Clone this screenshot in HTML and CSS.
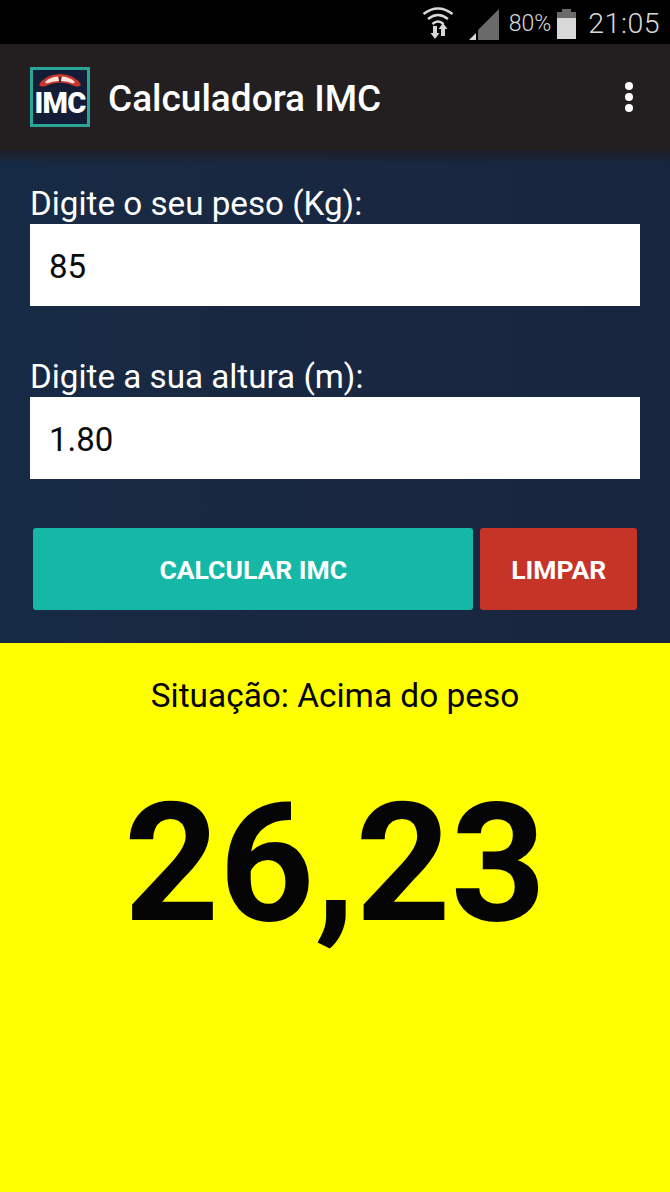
FILE: index.html
```html
<!DOCTYPE html>
<html lang="pt">
<head>
<meta charset="utf-8">
<title>Calculadora IMC</title>
<link rel="stylesheet" href="styles.css">
</head>
<body>
<div class="screen">
  <div class="status">
    <svg class="wifi" width="32" height="34" viewBox="0 0 32 34">
      <path d="M1.500 8 Q16 -3 30.500 8" fill="none" stroke="#d8d8d8" stroke-width="2.600"/>
      <path d="M6 13 Q16 5 26 13" fill="none" stroke="#d8d8d8" stroke-width="2.600"/>
      <path d="M10.500 18 Q16 13 21.500 18" fill="none" stroke="#d8d8d8" stroke-width="2.600"/>
      <path d="M11 20h4v7h2.500l-4.500 6l-4.500-6H11z" fill="#d8d8d8"/>
      <path d="M21 17l4.500 6H23v7h-4v-7h-2.500z" fill="#d8d8d8"/>
    </svg>
    <svg class="signal" width="30" height="31" viewBox="0 0 30 31">
      <path d="M30 0V31H9V21z" fill="#6a6a6a"/>
      <path d="M7 24V31H0z" fill="#d8d8d8"/>
    </svg>
    <span class="pct">80%</span>
    <svg class="battery" width="19" height="30" viewBox="0 0 19 30">
      <path d="M5 0h9v3h5v7H0V3h5z" fill="#6a6a6a"/>
      <path d="M0 9h19v21H0z" fill="#d8d8d8"/>
    </svg>
    <span class="clock">21:05</span>
  </div>
  <header class="appbar">
    <div class="logo">
      <svg class="logo-arc" width="44" height="16" viewBox="0 0 44 16">
        <path d="M1 12 Q6 2 22 1 Q38 2 43 12 Q40 15 34 12 Q22 7 10 12 Q4 15 1 12z" fill="#c9372c"/>
        <path d="M7 9 Q12 4 20 3.500 L21 8 Q14 8 9 10.500z M37 9 Q32 4 24 3.500 L23 8 Q30 8 35 10.500z" fill="#fbe4dc"/>
        <path d="M21.300 4h1.400v5h-1.400z" fill="#1a2238"/>
      </svg>
      <span class="logo-text">IMC</span>
    </div>
    <h1 class="title">Calculadora IMC</h1>
    <div class="menu"><i></i><i></i><i></i></div>
  </header>
  <main class="form">
    <label class="label">Digite o seu peso (Kg):</label>
    <div class="field">85</div>
    <label class="label label-second">Digite a sua altura (m):</label>
    <div class="field">1.80</div>
    <div class="buttons">
      <button class="btn btn-calc">CALCULAR IMC</button>
      <button class="btn btn-clear">LIMPAR</button>
    </div>
  </main>
  <section class="result">
    <p class="situation">Situação: Acima do peso</p>
    <p class="value">26,23</p>
  </section>
</div>
</body>
</html>
```
FILE: styles.css
```css
* { box-sizing: border-box; }
html, body { margin: 0; padding: 0; }
body { font-family: Roboto, "Liberation Sans", sans-serif; background: #ffff00; }
.screen { width: 670px; height: 1192px; display: flex; flex-direction: column; overflow: hidden; }

.status { height: 44px; background: #000; display: flex; align-items: center; justify-content: flex-end; padding-right: 10px; color: #d8d8d8; flex: none; }
.wifi { margin-right: 15px; margin-top: 2px; }
.signal { margin-right: 10px; margin-top: 4px; }
.pct { font-size: 23px; font-weight: 300; margin-right: 6px; margin-top: 2px; }
.battery { margin-right: 12px; margin-top: 3px; }
.clock { font-size: 28.500px; font-weight: 300; letter-spacing: 0.500px; margin-top: 2px; }

.appbar { height: 106px; background: #231f20; display: flex; align-items: center; padding: 0 37px 0 30px; flex: none; }
.logo { width: 60px; height: 60px; border: 3px solid #2aa596; background: #131d36; display: flex; flex-direction: column; align-items: center; flex: none; padding-top: 3px; }
.logo-arc { display: block; filter: blur(0.6px); }
.logo-text { font-family: Roboto, sans-serif; font-weight: 900; font-size: 29px; line-height: 28px; color: #fff; margin-top: 0; letter-spacing: -0.800px; }
.title { font-size: 37px; font-weight: 500; color: #fff; margin: 0 0 0 18px; flex: 1; line-height: 42px; position: relative; top: 2px; }
.menu { display: flex; flex-direction: column; gap: 3px; margin-top: -1px; }
.menu i { display: block; width: 8px; height: 8px; border-radius: 50%; background: #fff; }

.form { height: 493px; flex: none; padding: 34px 30px 0; display: flex; flex-direction: column;
  background:
    linear-gradient(to bottom, rgba(30, 30, 34, 0.9) 0, rgba(30, 30, 34, 0) 14px),
    linear-gradient(to right, #162a45 0, #192942 25%, #192741 60%, #17253f 100%); }
.label { font-size: 33.200px; line-height: 40px; color: #fff; height: 40px; }
.label-second { margin-top: 51px; }
.field { height: 82px; background: #fff; color: #0a0a0a; font-size: 33px; line-height: 86px; padding-left: 19px; }
.buttons { display: flex; margin-top: 49px; padding: 0 0 0 3.300px; gap: 7px; }
.btn { height: 82px; flex: none; border: 0; border-radius: 3px; color: #fff; font-family: Roboto, sans-serif; font-weight: 700; font-size: 26.500px; padding: 0; }
.btn-calc { width: 440px; background: #15b8a6; }
.btn-clear { width: 157px; background: #c63327; }

.result { flex: 1; background: #ffff00; color: #050505; display: flex; flex-direction: column; align-items: center; }
.situation { margin: 33px 0 0; font-size: 33.400px; line-height: 40px; }
.value { margin: 53px 0 0; font-size: 166px; line-height: 190px; font-weight: 700; font-family: Roboto, sans-serif; }
```
